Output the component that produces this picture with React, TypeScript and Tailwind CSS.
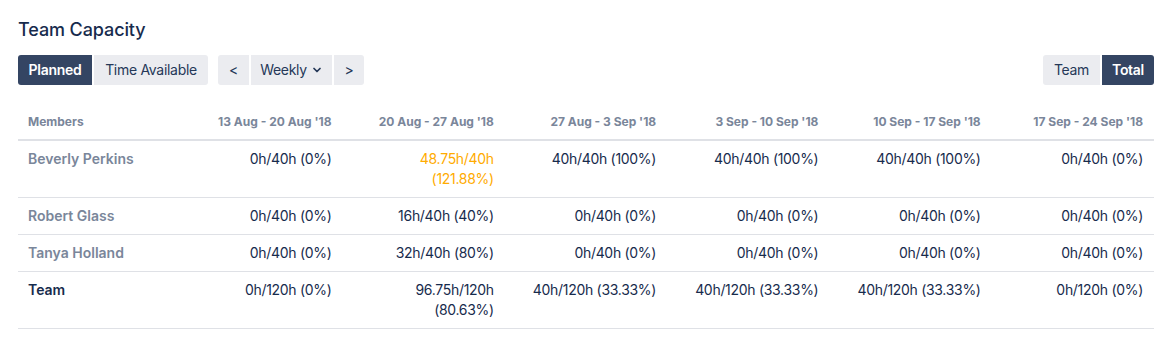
import { ChevronDown } from "lucide-react";

type Cell = { text: string; over?: boolean };
type Row = { name: string; total?: boolean; cells: Cell[] };

const weeks = [
  "13 Aug - 20 Aug '18",
  "20 Aug - 27 Aug '18",
  "27 Aug - 3 Sep '18",
  "3 Sep - 10 Sep '18",
  "10 Sep - 17 Sep '18",
  "17 Sep - 24 Sep '18",
];

const rows: Row[] = [
  {
    name: "Beverly Perkins",
    cells: [
      { text: "0h/40h (0%)" },
      { text: "48.75h/40h (121.88%)", over: true },
      { text: "40h/40h (100%)" },
      { text: "40h/40h (100%)" },
      { text: "40h/40h (100%)" },
      { text: "0h/40h (0%)" },
    ],
  },
  {
    name: "Robert Glass",
    cells: [
      { text: "0h/40h (0%)" },
      { text: "16h/40h (40%)" },
      { text: "0h/40h (0%)" },
      { text: "0h/40h (0%)" },
      { text: "0h/40h (0%)" },
      { text: "0h/40h (0%)" },
    ],
  },
  {
    name: "Tanya Holland",
    cells: [
      { text: "0h/40h (0%)" },
      { text: "32h/40h (80%)" },
      { text: "0h/40h (0%)" },
      { text: "0h/40h (0%)" },
      { text: "0h/40h (0%)" },
      { text: "0h/40h (0%)" },
    ],
  },
  {
    name: "Team",
    total: true,
    cells: [
      { text: "0h/120h (0%)" },
      { text: "96.75h/120h (80.63%)" },
      { text: "40h/120h (33.33%)" },
      { text: "40h/120h (33.33%)" },
      { text: "40h/120h (33.33%)" },
      { text: "0h/120h (0%)" },
    ],
  },
];

const btn = "flex h-[30px] items-center rounded-[3px] text-sm tracking-[-0.3px]";
const idle = "bg-[#EBECF0] text-[#253858]";
const active = "bg-[#344563] font-semibold text-white";

export default function App() {
  return (
    <div className="min-h-[338px] bg-white pl-[18px] pr-[17px] pt-[18px] font-['Inter',sans-serif] text-[#172B4D]">
      <h1 className="text-[18px] font-medium leading-6 tracking-[-0.1px]">Team Capacity</h1>

      <div className="mt-[13px] flex items-center">
        <div className="flex gap-[2px]">
          <button type="button" className={`${btn} ${active} w-[74px] justify-center rounded-r-none`}>
            Planned
          </button>
          <button type="button" className={`${btn} ${idle} w-[114px] justify-center rounded-l-none`}>
            Time Available
          </button>
        </div>

        <div className="ml-[10px] flex gap-[2px]">
          <button type="button" className={`${btn} ${idle} w-[31px] justify-center rounded-r-none`}>
            &lt;
          </button>
          <button type="button" className={`${btn} ${idle} w-[81px] justify-center gap-1 rounded-none`}>
            Weekly
            <ChevronDown size={12} strokeWidth={3.5} />
          </button>
          <button type="button" className={`${btn} ${idle} w-[30px] justify-center rounded-l-none`}>
            &gt;
          </button>
        </div>

        <div className="ml-auto flex gap-[2px]">
          <button type="button" className={`${btn} ${idle} w-[57px] justify-center rounded-r-none`}>
            Team
          </button>
          <button type="button" className={`${btn} ${active} w-[52px] justify-center rounded-l-none`}>
            Total
          </button>
        </div>
      </div>

      <table className="mt-[25px] w-full table-fixed border-collapse text-sm">
        <thead>
          <tr className="border-b-2 border-[#DFE1E6]">
            <th className="px-[10px] pt-1 pb-[9px] text-left text-xs font-bold leading-4 text-[#7A869A]">
              Members
            </th>
            {weeks.map((w) => (
              <th
                key={w}
                className="pl-[10px] pr-[11px] pt-1 pb-[9px] text-right text-xs font-bold leading-4 whitespace-nowrap text-[#7A869A]"
              >
                {w}
              </th>
            ))}
          </tr>
        </thead>
        <tbody>
          {rows.map((r) => (
            <tr key={r.name} className="border-b border-[#DFE1E6] align-top">
              <td
                className={`px-[10px] py-2 leading-5 font-semibold ${r.total ? "text-[#172B4D]" : "text-[#7A869A]"}`}
              >
                {r.name}
              </td>
              {r.cells.map((c, i) => (
                <td
                  key={i}
                  className={`pl-[16px] pr-[11px] py-2 text-right leading-5 tracking-[-0.3px] ${c.over ? "text-[#FFAB00]" : "text-[#172B4D]"}`}
                >
                  {c.text}
                </td>
              ))}
            </tr>
          ))}
        </tbody>
      </table>
    </div>
  );
}
